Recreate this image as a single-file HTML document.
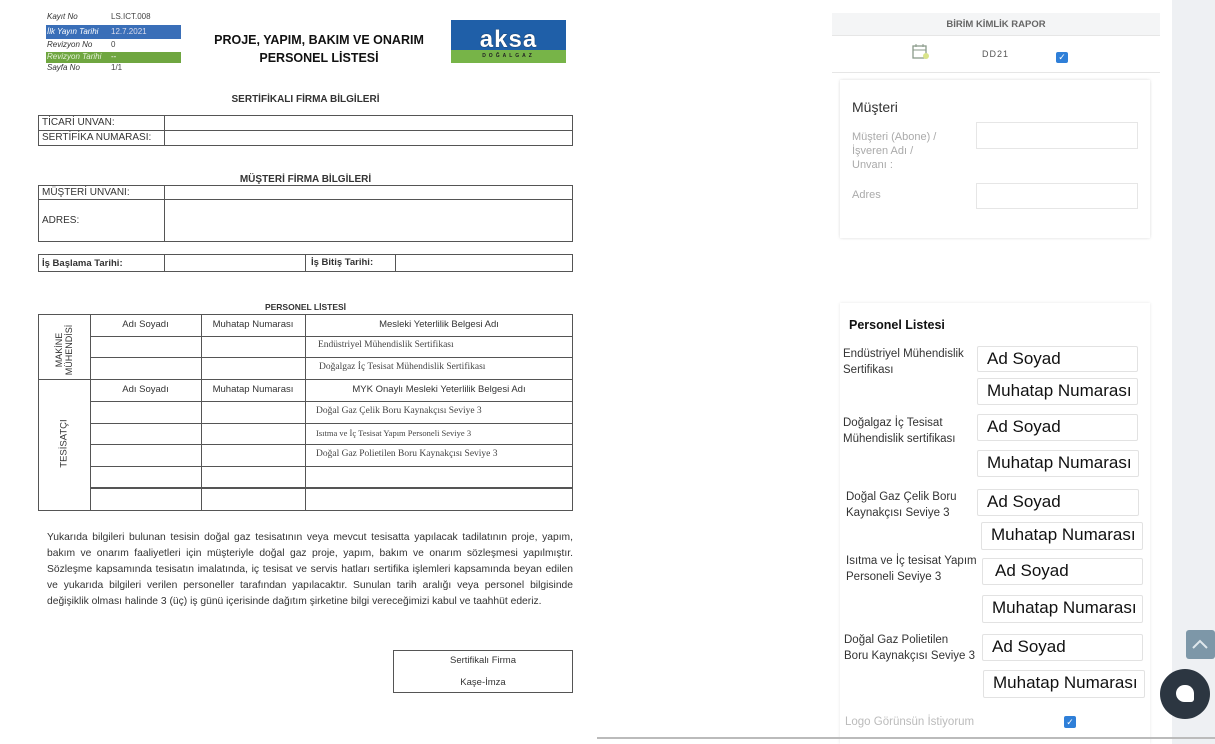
<!DOCTYPE html>
<html><head><meta charset="utf-8"><style>
*{margin:0;padding:0;box-sizing:border-box}
body{width:1215px;height:744px;background:#fff;position:relative;overflow:hidden;font-family:"Liberation Sans",sans-serif;color:#222}
.a{position:absolute;white-space:nowrap}
.hl{position:absolute;height:1px;background:#555}
.vl{position:absolute;width:1px;background:#555}
.s{font-size:10px;color:#333}
.b{font-weight:bold}
.ser{font-family:"Liberation Serif",serif;font-size:9.5px;color:#444}
.inp{position:absolute;border:1px solid #e2e2e2;border-radius:2px;background:#fff;font-size:17px;color:#111;padding-left:9px;line-height:24px}
.lbl{position:absolute;font-size:11.5px;color:#333;line-height:16px}
.m{position:absolute;font-size:8px;line-height:10px;font-style:italic;color:#333}
.mv{position:absolute;font-size:8px;line-height:10px;color:#444}
</style></head><body>

<!-- header meta -->
<div class="a" style="left:46px;top:25px;width:135px;height:14px;background:#3a6fb8"></div>
<div class="a" style="left:46px;top:52px;width:135px;height:11px;background:#6fa640"></div>
<div class="m" style="left:47px;top:12px">Kayıt No</div>
<div class="m" style="left:47px;top:27px;color:#fff">İlk Yayın Tarihi</div>
<div class="m" style="left:47px;top:40px">Revizyon No</div>
<div class="m" style="left:47px;top:52px;color:#e4f0d8">Revizyon Tarihi</div>
<div class="m" style="left:47px;top:63px">Sayfa No</div>
<div class="mv" style="left:111px;top:12px">LS.ICT.008</div>
<div class="mv" style="left:111px;top:27px;color:#dde">12.7.2021</div>
<div class="mv" style="left:111px;top:40px">0</div>
<div class="mv" style="left:111px;top:52px;color:#fff">--</div>
<div class="mv" style="left:111px;top:63px">1/1</div>
<div class="a b" style="left:200px;top:31px;width:238px;text-align:center;font-size:12.5px;line-height:18px;color:#111">PROJE, YAPIM, BAKIM VE ONARIM<br>PERSONEL LİSTESİ</div>
<div class="a" style="left:451px;top:20px;width:115px;height:30px;background:#1f5fa8"></div>
<div class="a" style="left:451px;top:50px;width:115px;height:13px;background:#77b448"></div>
<div class="a b" style="left:451px;top:26px;width:115px;text-align:center;font-size:24px;line-height:28px;color:#fff;letter-spacing:1px;text-shadow:0 0 1px #000">aksa</div>
<div class="a b" style="left:451px;top:53px;width:115px;text-align:center;font-size:5px;color:#222;letter-spacing:3px">DOĞALGAZ</div>

<!-- sertifikali -->
<div class="a b s" style="left:38px;top:94px;width:535px;text-align:center;font-size:10px">SERTİFİKALI FİRMA BİLGİLERİ</div>
<div class="a" style="left:38px;top:115px;width:535px;height:31px;border:1px solid #555"></div>
<div class="hl" style="left:38px;top:130px;width:535px"></div>
<div class="vl" style="left:164px;top:115px;height:31px"></div>
<div class="a s" style="left:42px;top:117px">TİCARİ UNVAN:</div>
<div class="a s" style="left:42px;top:132px">SERTİFİKA NUMARASI:</div>

<div class="a b s" style="left:38px;top:174px;width:535px;text-align:center">MÜŞTERİ FİRMA BİLGİLERİ</div>
<div class="a" style="left:38px;top:185px;width:535px;height:57px;border:1px solid #555"></div>
<div class="hl" style="left:38px;top:199px;width:535px"></div>
<div class="vl" style="left:164px;top:185px;height:57px"></div>
<div class="a s" style="left:42px;top:187px">MÜŞTERİ UNVANI:</div>
<div class="a s" style="left:42px;top:215px">ADRES:</div>

<div class="a" style="left:38px;top:254px;width:535px;height:18px;border:1px solid #555"></div>
<div class="vl" style="left:164px;top:254px;height:18px"></div>
<div class="vl" style="left:305px;top:254px;height:18px"></div>
<div class="vl" style="left:395px;top:254px;height:18px"></div>
<div class="a b s" style="left:42px;top:258px;font-size:9.5px">İş Başlama Tarihi:</div>
<div class="a b s" style="left:311px;top:257px;font-size:9.5px">İş Bitiş Tarihi:</div>

<!-- personel table -->
<div class="a b s" style="left:38px;top:302px;width:535px;text-align:center;font-size:8.5px">PERSONEL LİSTESİ</div>
<div class="a" style="left:38px;top:314px;width:535px;height:197px;border:1px solid #555"></div>
<div class="vl" style="left:90px;top:314px;height:197px"></div>
<div class="vl" style="left:201px;top:314px;height:197px"></div>
<div class="vl" style="left:305px;top:314px;height:197px"></div>
<div class="hl" style="left:38px;top:379px;width:535px"></div>
<div class="hl" style="left:90px;top:336px;width:483px"></div>
<div class="hl" style="left:90px;top:357px;width:483px"></div>
<div class="hl" style="left:90px;top:401px;width:483px"></div>
<div class="hl" style="left:90px;top:423px;width:483px"></div>
<div class="hl" style="left:90px;top:444px;width:483px"></div>
<div class="hl" style="left:90px;top:466px;width:483px"></div>
<div class="hl" style="left:90px;top:487px;width:483px;height:2px"></div>
<div class="a s" style="left:34px;top:340px;width:60px;text-align:center;transform:rotate(-90deg);font-size:9px;line-height:10px">MAKİNE<br>MÜHENDİSİ</div>
<div class="a s" style="left:34px;top:438px;width:60px;text-align:center;transform:rotate(-90deg);font-size:9.5px">TESİSATÇI</div>
<div class="a s" style="left:90px;top:319px;width:111px;text-align:center;font-size:9.5px">Adı Soyadı</div>
<div class="a s" style="left:201px;top:319px;width:104px;text-align:center;font-size:9.5px">Muhatap Numarası</div>
<div class="a s" style="left:305px;top:319px;width:268px;text-align:center;font-size:9.5px">Mesleki Yeterlilik Belgesi Adı</div>
<div class="a ser" style="left:318px;top:340px">Endüstriyel Mühendislik  Sertifikası</div>
<div class="a ser" style="left:319px;top:362px">Doğalgaz İç Tesisat Mühendislik Sertifikası</div>
<div class="a s" style="left:90px;top:384px;width:111px;text-align:center;font-size:9.5px">Adı Soyadı</div>
<div class="a s" style="left:201px;top:384px;width:104px;text-align:center;font-size:9.5px">Muhatap Numarası</div>
<div class="a s" style="left:305px;top:384px;width:268px;text-align:center;font-size:9.5px">MYK Onaylı Mesleki Yeterlilik Belgesi Adı</div>
<div class="a ser" style="left:316px;top:406px">Doğal Gaz Çelik Boru Kaynakçısı Seviye 3</div>
<div class="a ser" style="left:316px;top:428px;font-size:8.5px">Isıtma ve İç Tesisat Yapım Personeli Seviye 3</div>
<div class="a ser" style="left:316px;top:449px">Doğal Gaz Polietilen Boru Kaynakçısı Seviye 3</div>

<div class="a" style="left:47px;top:530px;width:526px;font-size:10.3px;line-height:16px;color:#333;text-align:justify;text-align-last:left;white-space:normal">Yukarıda bilgileri bulunan tesisin doğal gaz tesisatının veya mevcut tesisatta yapılacak tadilatının proje, yapım, bakım ve onarım faaliyetleri için müşteriyle doğal gaz proje, yapım, bakım ve onarım sözleşmesi yapılmıştır. Sözleşme kapsamında tesisatın imalatında, iç tesisat ve servis hatları sertifika işlemleri kapsamında beyan edilen ve yukarıda bilgileri verilen personeller tarafından yapılacaktır. Sunulan tarih aralığı veya personel bilgisinde değişiklik olması halinde 3 (üç) iş günü içerisinde dağıtım şirketine bilgi vereceğimizi kabul ve taahhüt ederiz.</div>
<div class="a" style="left:393px;top:650px;width:180px;height:43px;border:1px solid #555"></div>
<div class="a s" style="left:393px;top:655px;width:180px;text-align:center;font-size:9.5px">Sertifikalı Firma</div>
<div class="a s" style="left:393px;top:677px;width:180px;text-align:center;font-size:9.5px">Kaşe-İmza</div>

<!-- right side -->
<div class="a" style="left:1172px;top:0;width:43px;height:744px;background:#eef0f3"></div>
<div class="a" style="left:832px;top:13px;width:328px;height:23px;background:#f4f5f6;border-bottom:1px solid #e6e6e6"></div>
<div class="a b" style="left:832px;top:19px;width:328px;text-align:center;font-size:9.5px;color:#666">BİRİM KİMLİK RAPOR</div>
<div class="hl" style="left:832px;top:72px;width:328px;background:#e6e6e6"></div>
<svg class="a" style="left:912px;top:44px" width="18" height="16" viewBox="0 0 18 16"><rect x="1" y="2" width="13" height="12" fill="none" stroke="#8a9a8a" stroke-width="1.3"/><line x1="1" y1="6" x2="14" y2="6" stroke="#8a9a8a"/><line x1="4" y1="0" x2="4" y2="3" stroke="#8a9a8a"/><line x1="11" y1="0" x2="11" y2="3" stroke="#8a9a8a"/><circle cx="14" cy="12" r="3" fill="#d9e48a"/></svg>
<div class="a" style="left:982px;top:49px;font-size:9px;color:#555;letter-spacing:1px">DD21</div>
<div class="a" style="left:1056px;top:52px;width:12px;height:11px;background:#2f7fd8;border-radius:2px;color:#fff;font-size:9px;line-height:11px;text-align:center">✓</div>

<div class="a" style="left:840px;top:80px;width:310px;height:158px;background:#fff;box-shadow:0 0 3px rgba(0,0,0,.15)"></div>
<div class="a" style="left:852px;top:99px;font-size:14px;color:#333">Müşteri</div>
<div class="a" style="left:852px;top:130px;font-size:11px;line-height:14px;color:#aaa">Müşteri (Abone) /<br>İşveren Adı /<br>Unvanı :</div>
<div class="a" style="left:976px;top:122px;width:162px;height:27px;border:1px solid #e6e6e6"></div>
<div class="a" style="left:852px;top:189px;font-size:11px;color:#aaa">Adres</div>
<div class="a" style="left:976px;top:183px;width:162px;height:26px;border:1px solid #e6e6e6"></div>

<div class="a" style="left:840px;top:303px;width:310px;height:441px;background:#fff;box-shadow:0 0 3px rgba(0,0,0,.1)"></div>
<div class="a b" style="left:849px;top:318px;font-size:12.5px;color:#111">Personel Listesi</div>
<div class="lbl" style="left:843px;top:346px">Endüstriyel Mühendislik<br>Sertifikası</div>
<div class="inp" style="left:977px;top:346px;width:161px;height:26px">Ad Soyad</div>
<div class="inp" style="left:977px;top:378px;width:161px;height:27px">Muhatap Numarası</div>
<div class="lbl" style="left:843px;top:415px">Doğalgaz İç Tesisat<br>Mühendislik sertifikası</div>
<div class="inp" style="left:977px;top:414px;width:161px;height:27px">Ad Soyad</div>
<div class="inp" style="left:977px;top:450px;width:162px;height:27px">Muhatap Numarası</div>
<div class="lbl" style="left:846px;top:489px">Doğal Gaz Çelik Boru<br>Kaynakçısı Seviye 3</div>
<div class="inp" style="left:977px;top:489px;width:162px;height:27px">Ad Soyad</div>
<div class="inp" style="left:981px;top:522px;width:162px;height:28px">Muhatap Numarası</div>
<div class="lbl" style="left:846px;top:553px">Isıtma ve İç tesisat Yapım<br>Personeli Seviye 3</div>
<div class="inp" style="left:982px;top:558px;width:161px;height:27px;padding-left:12px">Ad Soyad</div>
<div class="inp" style="left:982px;top:595px;width:161px;height:28px">Muhatap Numarası</div>
<div class="lbl" style="left:844px;top:632px">Doğal Gaz Polietilen<br>Boru Kaynakçısı Seviye 3</div>
<div class="inp" style="left:982px;top:634px;width:161px;height:27px">Ad Soyad</div>
<div class="inp" style="left:983px;top:670px;width:162px;height:28px">Muhatap Numarası</div>
<div class="a" style="left:845px;top:716px;font-size:11.5px;color:#bbb">Logo Görünsün İstiyorum</div>
<div class="a" style="left:1064px;top:716px;width:12px;height:12px;background:#2f7fd8;border-radius:2px;color:#fff;font-size:9px;line-height:12px;text-align:center">✓</div>
<div class="hl" style="left:597px;top:737px;width:618px;background:#bbb;height:2px"></div>

<div class="a" style="left:1186px;top:630px;width:29px;height:29px;background:#7d97a8;border-radius:3px"></div>
<svg class="a" style="left:1190px;top:636px" width="20" height="16"><polyline points="3,12 10,5 17,12" fill="none" stroke="#dfe7ec" stroke-width="2"/></svg>
<div class="a" style="left:1160px;top:669px;width:50px;height:50px;border-radius:50%;background:#2c3641"></div>
<div class="a" style="left:1176px;top:685px;width:18px;height:17px;background:#fff;border-radius:9px 9px 3px 9px"></div>
</body></html>
